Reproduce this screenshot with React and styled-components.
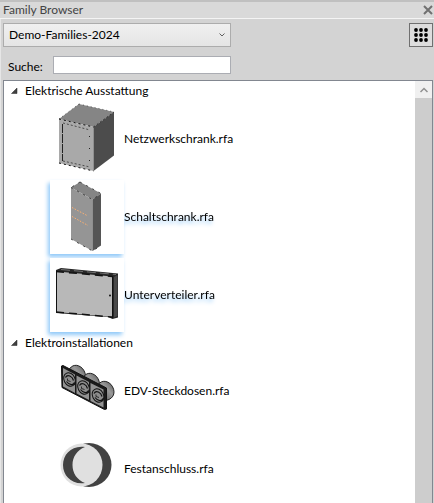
import React, { useState } from 'react'
import styled, { createGlobalStyle, css } from 'styled-components'

const GlobalStyle = createGlobalStyle`
    * {
        box-sizing: border-box;
    }
    body {
        margin: 0;
        background: #d3d3d3;
    }
    button, input, select {
        margin: 0;
        font: inherit;
        color: inherit;
    }
`

const Panel = styled.div`
    display: flex;
    flex-direction: column;
    height: 100vh;
    overflow: hidden;
    border-top: 2px solid #c0c0c0;
    background: #d3d3d3;
    color: #000;
    font: 12px/18px Lato, 'Open Sans', sans-serif;
`

const TitleBar = styled.header`
    display: flex;
    flex: none;
    align-items: center;
    justify-content: space-between;
    height: 17px;
    padding: 0 1px 0 3px;
    border-bottom: 1px solid #f4f4f4;
    background: #d9d9d9;
    color: #444;
`

const Title = styled.h1`
    margin: 0;
    font-size: 12px;
    font-weight: 400;
`

const CloseButton = styled.button`
    display: flex;
    padding: 0;
    border: 0;
    background: none;
`

const Body = styled.main`
    display: flex;
    flex: 1;
    flex-direction: column;
    min-height: 0;
    padding: 4px 1px 0 2px;
    border-left: 1px solid #e6e6e6;
`

const Toolbar = styled.div`
    display: flex;
    flex: none;
    justify-content: space-between;
`

const SelectBox = styled.div`
    display: grid;
    width: 228px;
    align-items: center;

    > * {
        grid-area: 1 / 1;
    }
    > svg {
        justify-self: end;
        margin-right: 6px;
        pointer-events: none;
    }
`

const Select = styled.select`
    width: 100%;
    height: 24px;
    padding: 0 20px 0 5px;
    appearance: none;
    border: 1px solid #acacac;
    border-radius: 0;
    background: linear-gradient(#f0f0f0, #e5e5e5);
`

const GridButton = styled.button`
    display: flex;
    align-items: center;
    justify-content: center;
    width: 24px;
    height: 24px;
    padding: 0;
    border: 1px solid #707070;
    background: #ddd;
`

const SearchRow = styled.div`
    display: flex;
    flex: none;
    gap: 10px;
    width: 228px;
    padding: 9px 0 6px 5px;
`

const SearchLabel = styled.label`
    flex: none;
    width: 35px;
    height: 18px;
    line-height: 22px;
`

const SearchInput = styled.input`
    flex: 1;
    min-width: 0;
    height: 18px;
    padding: 0 3px;
    border: 1px solid #abadb3;
    background: #fff;
`

const TreeFrame = styled.div`
    display: flex;
    flex: 1;
    min-height: 0;
    border: 1px solid #828790;
    border-bottom: 0;
    background: #fff;
`

const Tree = styled.div`
    flex: 1;
    min-width: 0;
    overflow: hidden;
    padding: 1px 0 0 6px;
`

const GroupHeader = styled.button`
    display: flex;
    align-items: center;
    gap: 7px;
    width: 100%;
    height: 18px;
    padding: 0;
    border: 0;
    background: none;
    text-align: left;
`

const ItemList = styled.ul`
    margin: 0;
    padding: 0 0 0 40px;
    list-style: none;
`

const ItemButton = styled.button`
    display: flex;
    align-items: center;
    width: 100%;
    height: 78px;
    padding: 0;
    border: 0;
    background: none;
    text-align: left;
    ${({ $glow }) => $glow && css`
        filter: drop-shadow(-2px 3px 2px #8fc8f8);
    `}
`

const Thumbnail = styled.span`
    display: flex;
    width: 74px;
    height: 74px;
    background: #fff;
`

const ScrollBar = styled.div`
    display: flex;
    flex: none;
    flex-direction: column;
    width: 17px;
    background: #f0f0f0;
`

const ScrollUp = styled.button`
    display: flex;
    align-items: center;
    justify-content: center;
    height: 17px;
    padding: 0;
    border: 0;
    background: #f0f0f0;
`

const ScrollThumb = styled.div`
    flex: 1;
    background: #cdcdcd;
`

const Picture = ({ children }) => (
    <svg width="74" height="74" viewBox="0 0 74 74" aria-hidden="true">{children}</svg>
)

const NetworkCabinet = () => (
    <Picture>
        <path d="M29 2 64 10 43.500 25 9 17Z" fill="#858585" />
        <path d="M9 17 43.500 25V69L9 61Z" fill="#a9a9a9" />
        <path d="M64 10V53.500L43.500 69V25Z" fill="#4c4c4c" />
        <path d="M9 17 43.500 25M9 61 43.500 69" fill="none" stroke="#111" strokeDasharray="2 3" />
        <path d="M43.500 25 64 10" stroke="#222" strokeWidth="0.800" strokeDasharray="2 2" />
        <path d="M29 2 64 10M29 2 9 17" fill="none" stroke="#333" strokeWidth="0.700" strokeDasharray="1 3" />
        <path d="M12.500 22V59" stroke="#222" strokeDasharray="9 1" />
        <path d="M13 21 40 28M13 59 40 65" stroke="#333" strokeWidth="0.800" strokeDasharray="2 2" />
        <path d="M39.500 34V65" stroke="#222" strokeDasharray="1 11" />
    </Picture>
)

const SwitchCabinet = () => (
    <Picture>
        <path d="M30 2 51 13.500 42.500 19.500 21 7.500Z" fill="#858585" />
        <path d="M21 7.500 42.500 19.500V71L21 59Z" fill="#959595" />
        <path d="M51 13.500V65.500L42.500 71V19.500Z" fill="#555" />
        <path d="M21 7.500 42.500 19.500 51 13.500M30 2 51 13.500M21 59 42.500 71 51 65.500M30 2 21 7.500" fill="none" stroke="#222" strokeWidth="0.800" strokeDasharray="2 5" />
        <path d="M22 27.500 37 35.500M22 36.500 38 45.500" stroke="#ffb070" strokeDasharray="1.500 1.500" />
    </Picture>
)

const SubDistributor = () => (
    <Picture>
        <path d="M6 12 11 10 68 15.500V59.500L62.500 61 58 59 6 55Z" fill="#262626" />
        <path d="M7 13.500 62 18.500V59L7 54Z" fill="#b8b8b8" />
        <path d="M64 19 67.500 17V58L64 59.500Z" fill="#484848" />
        <path d="M11 11.500 66 16.500" stroke="#707070" strokeDasharray="9 4" />
        <path d="M6 13.500 62 18.500M6 54 62 59" stroke="#111" strokeWidth="1.500" strokeDasharray="8 5" />
        <path d="M6.500 13V54M62.500 18V60" stroke="#111" />
        <circle cx="60" cy="37.500" r="1" fill="#111" />
    </Picture>
)

const sockets = [[19.500, 25.500], [33.500, 33.500], [48, 41.500]]

const DataSockets = () => (
    <Picture>
        <defs>
            <linearGradient id="can" x1="0" y1="1" x2="1" y2="0">
                <stop offset="0" stopColor="#444" />
                <stop offset="0.600" stopColor="#999" />
                <stop offset="1" stopColor="#555" />
            </linearGradient>
        </defs>
        {sockets.map(([x, y]) => (
            <path
                key={x}
                d={`M${x - 1} ${y - 9}C${x + 2} ${y - 15} ${x + 8} ${y - 16} ${x + 13} ${y - 11}C${x + 18} ${y - 5} ${x + 17} ${y + 3} ${x + 8} ${y + 5}Z`}
                fill="url(#can)"
                stroke="#222"
            />
        ))}
        <path d="M11.500 12 13 11.500 56.500 34V55L54.500 55.500 12 33.500Z" fill="#1a1a1a" stroke="#111" />
        <path d="M13 14 25 20.500V39L13 32.500ZM26.500 21.500 39 28V46L26.500 39.500ZM40.500 29 53.500 35.500V53.500L40.500 47Z" fill="#929292" />
        {sockets.map(([x, y]) => (
            <g key={x} fill="none" stroke="#111">
                <ellipse cx={x} cy={y} rx="5.500" ry="7" fill="#8d8d8d" transform={`rotate(-28 ${x} ${y})`} />
                <path d={`M${x - 4} ${y - 2}C${x - 2} ${y - 6} ${x + 3} ${y - 3} ${x + 4} ${y + 1}M${x - 3} ${y + 2}C${x} ${y + 6} ${x + 4} ${y + 6} ${x + 5} ${y + 3}`} strokeWidth="1.200" />
                <path d={`M${x - 2} ${y - 1}V${y + 1}L${x + 1} ${y + 2}`} strokeWidth="0.800" />
            </g>
        ))}
    </Picture>
)

const FixedConnection = () => (
    <Picture>
        <ellipse cx="39" cy="33" rx="22.500" ry="22" fill="#424242" />
        <ellipse cx="31.500" cy="33" rx="21" ry="21.500" fill="#e0e0e0" />
        <path d="M35 15C22 13 13 22 13 33C13 44 22 53 35 51C27 48 22.500 41 22.500 33C22.500 25 27 18 35 15Z" fill="#424242" />
    </Picture>
)

const groups = [
    {
        name: 'Elektrische Ausstattung',
        items: [
            { name: 'Netzwerkschrank.rfa', Icon: NetworkCabinet },
            { name: 'Schaltschrank.rfa', Icon: SwitchCabinet, glow: true },
            { name: 'Unterverteiler.rfa', Icon: SubDistributor, glow: true },
        ],
    },
    {
        name: 'Elektroinstallationen',
        items: [
            { name: 'EDV-Steckdosen.rfa', Icon: DataSockets },
            { name: 'Festanschluss.rfa', Icon: FixedConnection },
        ],
    },
]

const Group = ({ group }) => {
    const [open, setOpen] = useState(true)
    return (
        <section>
            <GroupHeader aria-expanded={open} onClick={() => setOpen(!open)}>
                <svg width="8" height="8" viewBox="0 0 8 8" aria-hidden="true">
                    <path d={open ? 'M7 1V6.500H1.500Z' : 'M2 0 6 4 2 8Z'} fill="#404040" stroke="#262626" strokeWidth="0.500" />
                </svg>
                {group.name}
            </GroupHeader>
            {open && (
                <ItemList>
                    {group.items.map(({ name, Icon, glow }) => (
                        <li key={name}>
                            <ItemButton $glow={glow}>
                                <Thumbnail><Icon /></Thumbnail>
                                {name}
                            </ItemButton>
                        </li>
                    ))}
                </ItemList>
            )}
        </section>
    )
}

const App = () => {
    const [search, setSearch] = useState('')
    return (
        <>
            <GlobalStyle />
            <Panel>
                <TitleBar>
                    <Title>Family Browser</Title>
                    <CloseButton aria-label="Close">
                        <svg width="10" height="10" viewBox="0 0 10 10">
                            <path d="M1 1 9 9M9 1 1 9" stroke="#707070" strokeWidth="2" />
                        </svg>
                    </CloseButton>
                </TitleBar>
                <Body>
                    <Toolbar>
                        <SelectBox>
                            <Select aria-label="Demo-Families-2024">
                                <option>Demo-Families-2024</option>
                            </Select>
                            <svg width="6" height="4" viewBox="0 0 6 4">
                                <path d="M0.500 0.500 3 3 5.500 0.500" fill="none" stroke="#606060" />
                            </svg>
                        </SelectBox>
                        <GridButton aria-label="Grid">
                            <svg width="14" height="14" viewBox="0 0 14 14">
                                {[2, 7, 12].map(y => [2, 7, 12].map(x => (
                                    <circle key={`${x}-${y}`} cx={x} cy={y} r="1.900" />
                                )))}
                            </svg>
                        </GridButton>
                    </Toolbar>
                    <SearchRow>
                        <SearchLabel htmlFor="search">Suche:</SearchLabel>
                        <SearchInput id="search" value={search} onChange={e => setSearch(e.target.value)} />
                    </SearchRow>
                    <TreeFrame>
                        <Tree>
                            {groups.map(group => <Group key={group.name} group={group} />)}
                        </Tree>
                        <ScrollBar>
                            <ScrollUp aria-label="Scroll up">
                                <svg width="8" height="6" viewBox="0 0 8 6">
                                    <path d="M0.500 5 4 1.500 7.500 5" fill="none" stroke="#909090" strokeWidth="1.500" />
                                </svg>
                            </ScrollUp>
                            <ScrollThumb />
                        </ScrollBar>
                    </TreeFrame>
                </Body>
            </Panel>
        </>
    )
}

export default App
